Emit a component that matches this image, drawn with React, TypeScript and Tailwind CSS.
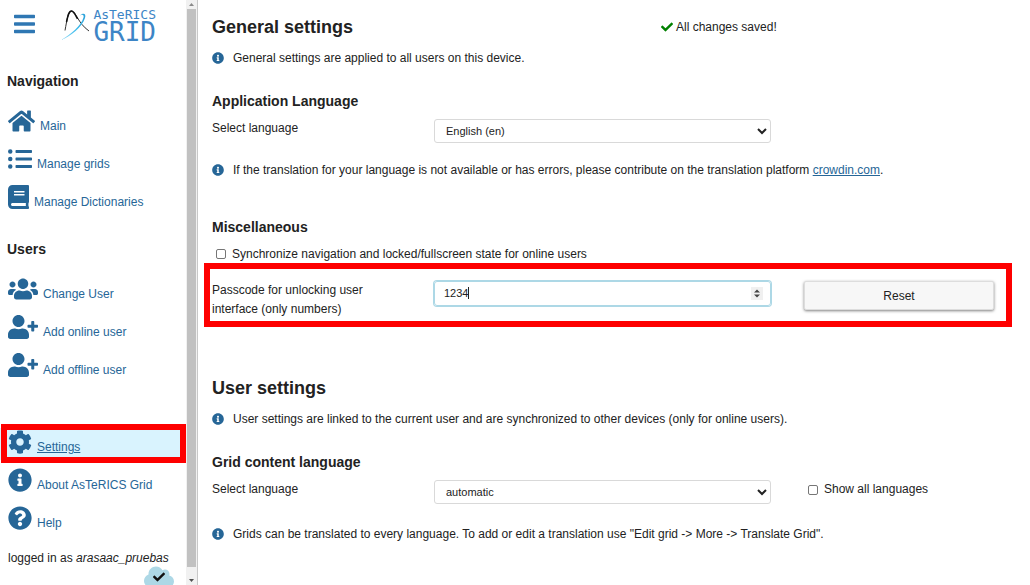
import type { ReactNode } from 'react';
import type { IconType } from 'react-icons';
import {
  FaBars,
  FaBook,
  FaCheck,
  FaCloud,
  FaCog,
  FaHome,
  FaInfoCircle,
  FaListUl,
  FaQuestionCircle,
  FaUserPlus,
  FaUsers,
} from 'react-icons/fa';

type NavItem = {
  label: string;
  icon: IconType;
  iconClass: string;
  active?: boolean;
};

const navigation: NavItem[] = [
  { label: 'Main', icon: FaHome, iconClass: 'w-[27px]' },
  { label: 'Manage grids', icon: FaListUl, iconClass: 'w-6' },
  { label: 'Manage Dictionaries', icon: FaBook, iconClass: 'w-[21px]' },
];

const users: NavItem[] = [
  { label: 'Change User', icon: FaUsers, iconClass: 'w-[30px]' },
  { label: 'Add online user', icon: FaUserPlus, iconClass: 'w-[30px]' },
  { label: 'Add offline user', icon: FaUserPlus, iconClass: 'w-[30px]' },
];

const general: NavItem[] = [
  { label: 'Settings', icon: FaCog, iconClass: 'w-6', active: true },
  { label: 'About AsTeRICS Grid', icon: FaInfoCircle, iconClass: 'w-6' },
  { label: 'Help', icon: FaQuestionCircle, iconClass: 'w-6' },
];

function NavList({ items }: { items: NavItem[] }) {
  return (
    <ul className="flex flex-col gap-[6px]">
      {items.map(({ label, icon: Icon, iconClass, active }) => (
        <li key={label} className="relative">
          <a
            href="#"
            className={
              active
                ? 'flex h-8 items-end gap-[5px] bg-[#d9f3fe] pb-[6px] pl-2 underline'
                : 'flex h-8 items-end gap-[5px] pb-[6px] pl-2'
            }
          >
            <Icon className={`h-6 shrink-0 ${iconClass}`} />
            <span className="leading-[14px]">{label}</span>
          </a>
          {active && (
            <span className="pointer-events-none absolute -top-1 -bottom-[3px] left-px right-0 border-6 border-[#fe0000]" />
          )}
        </li>
      ))}
    </ul>
  );
}

function Logo() {
  return (
    <div className="flex items-start">
      <svg viewBox="0 0 32 34" className="h-[34px] w-8" fill="none">
        <defs>
          <linearGradient id="swoosh" x1="0" y1="1" x2="1" y2="0">
            <stop offset="0" stopColor="#9bdcf5" />
            <stop offset="0.5" stopColor="#3dbcec" />
            <stop offset="1" stopColor="#2a9fd8" />
          </linearGradient>
        </defs>
        <path d="M4 22.500C6 12 7 3 10.500 3c4.500 0 6 12 17.500 20" stroke="#333" strokeWidth="1" />
        <path d="M5.500 14C7 7 8 3 10.500 3c2.300 0 3.800 3.500 6 8" stroke="#111" strokeWidth="1.500" />
        <path d="M0 32C10 26 20 18 22.500 9.500 23.200 7 21.500 6 19 7.500c3-3 6.500-2 5 2.500C21 19 10 28.500 0 32Z" fill="url(#swoosh)" />
      </svg>
      <div className="font-['DejaVu_Sans_Mono',monospace] text-[#3d85c6]">
        <div className="text-[13px] leading-[14px]">AsTeRICS</div>
        <div className="text-[26px] leading-5">GRID</div>
      </div>
    </div>
  );
}

function Sidebar() {
  return (
    <aside className="relative w-[186px] shrink-0 overflow-hidden text-[#266697]">
      <div className="flex h-[50px] items-start justify-between pt-2 pl-[14px] pr-[30px]">
        <button type="button" aria-label="Menu" className="pt-1 text-[#2f77b3]">
          <FaBars className="h-6 w-[21px]" />
        </button>
        <Logo />
      </div>
      <h2 className="mt-[21px] mb-4 pl-[7px] text-sm font-bold leading-5 text-[#222]">Navigation</h2>
      <NavList items={navigation} />
      <h2 className="mt-6 mb-4 pl-[7px] text-sm font-bold leading-5 text-[#222]">Users</h2>
      <NavList items={users} />
      <div className="mt-[45px]">
        <NavList items={general} />
      </div>
      <p className="mt-3 pl-2 leading-5 text-[#222]">
        logged in as <i>arasaac_pruebas</i>
      </p>
      <div className="absolute -bottom-1 left-36 flex h-6 w-[30px] items-center justify-center">
        <FaCloud className="absolute h-6 w-[30px] text-[#add8e6]" />
        <FaCheck className="relative size-3 text-[#111]" />
      </div>
    </aside>
  );
}

function ScrollTrack() {
  return (
    <div className="flex w-3 shrink-0 flex-col items-center border-r border-[#c8c8c8] bg-[#f1f1f1]" aria-hidden="true">
      <svg viewBox="0 0 9 9" className="size-[9px]">
        <path d="M2 6h5L4.500 3Z" fill="#8a8a8a" />
      </svg>
      <div className="w-[9px] flex-1 bg-[#c1c1c1]" />
      <svg viewBox="0 0 9 18" className="h-[18px] w-[9px]">
        <path d="M2 12h5l-2.500 3Z" fill="#505050" />
      </svg>
    </div>
  );
}

function Info({ children }: { children: ReactNode }) {
  return (
    <p className="flex items-center gap-[9px] leading-5">
      <FaInfoCircle className="size-3 shrink-0 text-[#266697]" />
      <span>{children}</span>
    </p>
  );
}

function Row({ children }: { children: ReactNode }) {
  return <div className="mt-2 grid grid-cols-[222fr_337fr_223fr] items-start pr-[22px]">{children}</div>;
}

const selectClass = 'h-6 w-full rounded-[3px] border border-[#d9d9d9] bg-white pl-[7px] text-[11px] text-[#222]';

const checkboxClass = 'size-[10px] appearance-none rounded-[2px] border border-[#767676] bg-white checked:bg-[#266697]';

export default function App() {
  return (
    <div className="flex h-screen min-h-[585px] bg-white font-['Liberation_Sans',Arial,sans-serif] text-xs text-[#222]">
      <Sidebar />
      <ScrollTrack />
      <main className="min-w-0 flex-1 pt-[15px] pr-[14px] pl-[14px]">
        <section>
          <div className="grid grid-cols-[449fr_355fr] items-center">
            <h1 className="text-lg font-bold leading-6">General settings</h1>
            <div className="flex items-center gap-[3px]">
              <FaCheck className="size-3 text-[#008000]" />
              <span>All changes saved!</span>
            </div>
          </div>
          <div className="mt-[9px]">
            <Info>General settings are applied to all users on this device.</Info>
          </div>
          <h2 className="mt-[23px] text-sm font-bold leading-5">Application Language</h2>
          <Row>
            <label htmlFor="app-language" className="leading-[19px]">
              Select language
            </label>
            <select id="app-language" defaultValue="en" className={selectClass}>
              <option value="en">English (en)</option>
            </select>
          </Row>
          <div className="mt-[17px]">
            <Info>
              If the translation for your language is not available or has errors, please contribute on the translation
              platform{' '}
              <a href="#" className="text-[#266697] underline">
                crowdin.com
              </a>
              .
            </Info>
          </div>
          <h2 className="mt-[37px] text-sm font-bold leading-5">Miscellaneous</h2>
          <div className="mt-[7px] flex items-center gap-[6px] pl-1 leading-5">
            <input id="sync" type="checkbox" className={checkboxClass} />
            <label htmlFor="sync">Synchronize navigation and locked/fullscreen state for online users</label>
          </div>
          <div className="relative mt-[17px]">
            <Row>
              <label htmlFor="passcode" className="w-[170px] leading-[19px]">
                Passcode for unlocking user interface (only numbers)
              </label>
              <div className="relative">
                <input
                  id="passcode"
                  type="number"
                  defaultValue={1234}
                  className="h-[25px] w-full rounded-[3px] border border-[#add8e6] pr-6 pb-px pl-[9px] text-[11px] text-[#222] ring-1 ring-[#add8e6] outline-none [appearance:textfield]"
                />
                <span className="absolute top-[6px] left-[34px] h-3 w-px bg-[#222]" />
                <svg viewBox="0 0 12 13" className="absolute top-[6px] right-2 h-[13px] w-3" aria-hidden="true">
                  <path d="M0 0h12v13H0Z" fill="#f0f0f0" />
                  <path d="M3 5.500h6L6 2.500ZM3 7.500h6l-3 3Z" fill="#444" />
                </svg>
              </div>
              <div className="pl-[33px]">
                <button
                  type="button"
                  className="h-[29px] w-full rounded-[2px] border border-[#ddd] bg-[#f7f7f7] shadow-[0_1px_3px_rgba(0,0,0,0.5)]"
                >
                  Reset
                </button>
              </div>
            </Row>
            <span className="pointer-events-none absolute -top-[18px] right-1 -bottom-2 -left-2 border-6 border-[#fe0000]" />
          </div>
        </section>

        <section className="mt-[57px]">
          <h1 className="text-lg font-bold leading-6">User settings</h1>
          <div className="mt-[9px]">
            <Info>
              User settings are linked to the current user and are synchronized to other devices (only for online users).
            </Info>
          </div>
          <h2 className="mt-[23px] text-sm font-bold leading-5">Grid content language</h2>
          <Row>
            <label htmlFor="content-language" className="leading-[19px]">
              Select language
            </label>
            <select id="content-language" defaultValue="auto" className={selectClass}>
              <option value="auto">automatic</option>
            </select>
            <div className="flex items-center gap-[6px] pl-[37px] leading-[19px]">
              <input id="all-languages" type="checkbox" className={checkboxClass} />
              <label htmlFor="all-languages">Show all languages</label>
            </div>
          </Row>
          <div className="mt-5">
            <Info>
              Grids can be translated to every language. To add or edit a translation use "Edit grid -&gt; More -&gt;
              Translate Grid".
            </Info>
          </div>
        </section>
      </main>
    </div>
  );
}
